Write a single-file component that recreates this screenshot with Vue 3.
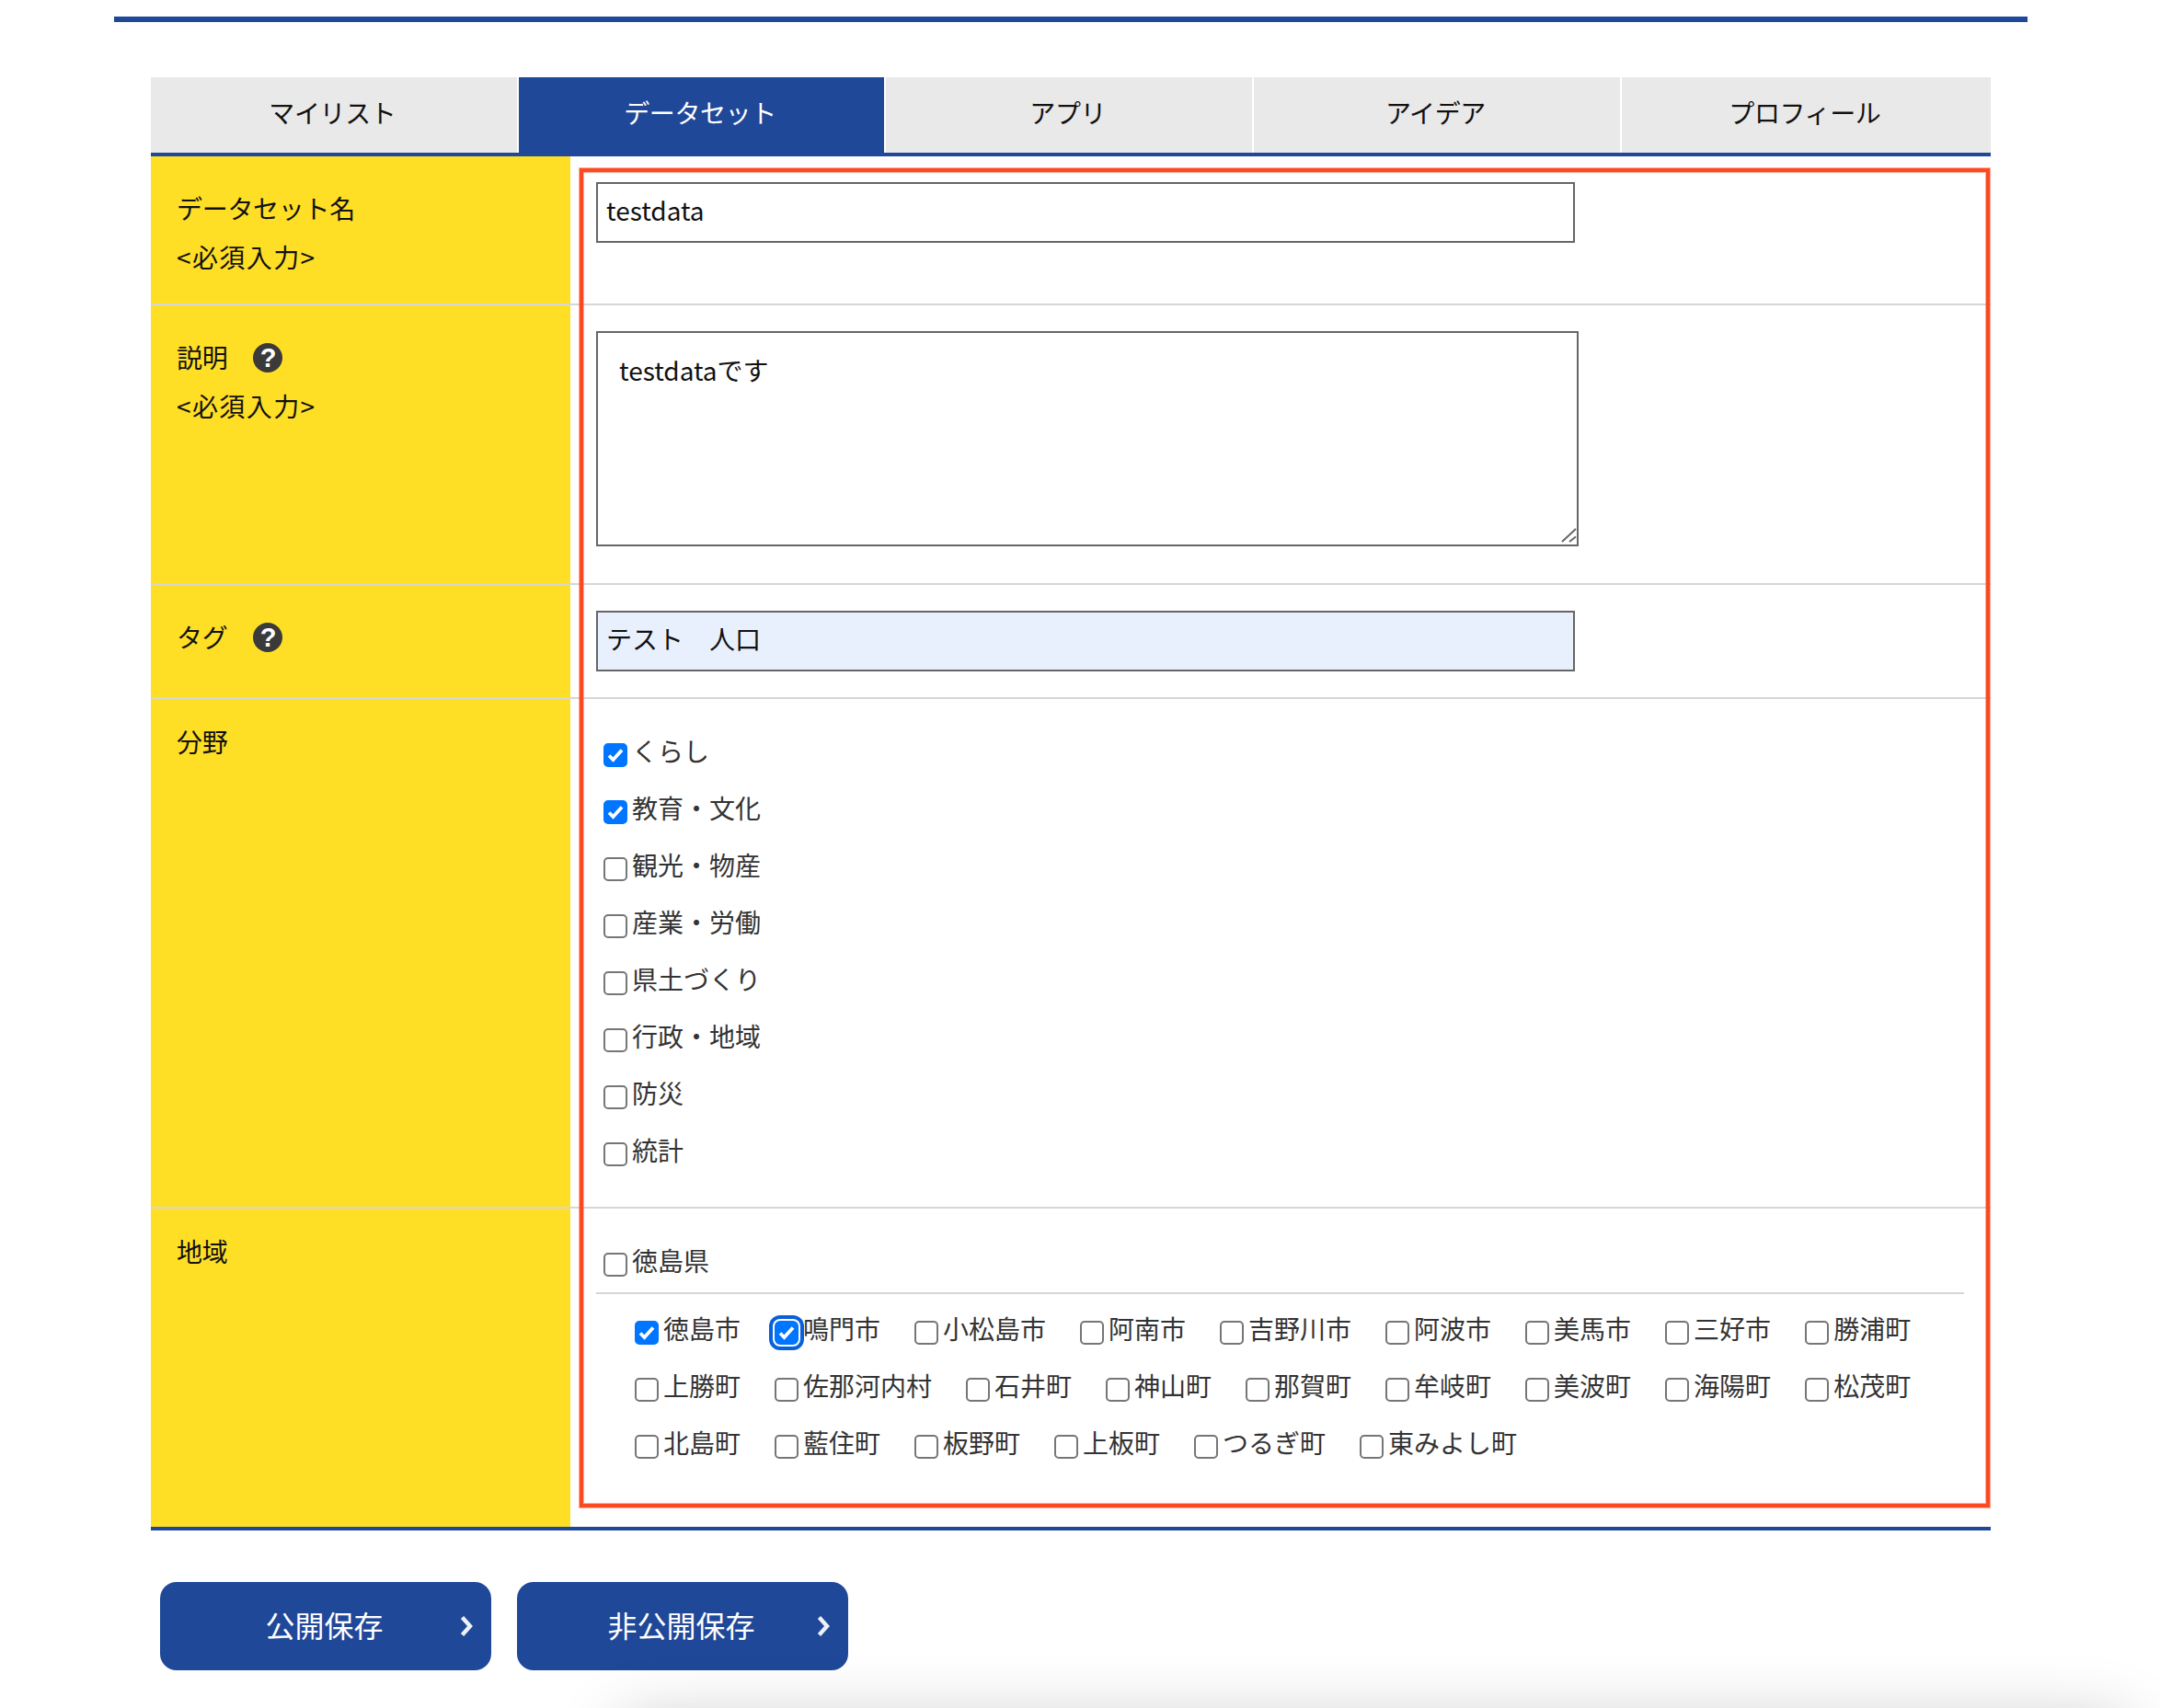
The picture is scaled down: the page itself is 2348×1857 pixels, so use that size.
<script setup>
const tabs = ['マイリスト', 'データセット', 'アプリ', 'アイデア', 'プロフィール']
const fields = [
  { name: 'くらし', checked: true },
  { name: '教育・文化', checked: true },
  { name: '観光・物産' },
  { name: '産業・労働' },
  { name: '県土づくり' },
  { name: '行政・地域' },
  { name: '防災' },
  { name: '統計' }
]
const cities = [
  { name: '徳島市', checked: true },
  { name: '鳴門市', checked: true, focus: true },
  ...['小松島市', '阿南市', '吉野川市', '阿波市', '美馬市', '三好市', '勝浦町', '上勝町', '佐那河内村', '石井町', '神山町', '那賀町', '牟岐町', '美波町', '海陽町', '松茂町', '北島町', '藍住町', '板野町', '上板町', 'つるぎ町', '東みよし町'].map((name) => ({ name }))
]
</script>

<template>
  <div class="page">
    <div class="topbar"></div>
    <main class="panel">
      <nav class="tabs">
        <div v-for="(t, i) in tabs" :key="t" class="tab" :class="{ active: i === 1 }">{{ t }}</div>
      </nav>
      <section class="table">
        <div class="row r1">
          <div class="head"><p>データセット名</p><p class="req">&lt;必須入力&gt;</p></div>
          <div class="body"><input class="text" type="text" value="testdata" /></div>
        </div>
        <div class="row r2">
          <div class="head">
            <p>説明<span class="help">?</span></p>
            <p class="req">&lt;必須入力&gt;</p>
          </div>
          <div class="body">
            <div class="area-wrap">
              <textarea class="area">testdataです</textarea>
              <svg class="grip" viewBox="0 0 18 18" width="18" height="18"><path d="M2 16 17 2M10 16 17 10.5" fill="none" stroke="#666" stroke-width="2" /></svg>
            </div>
          </div>
        </div>
        <div class="row r3">
          <div class="head"><p>タグ<span class="help">?</span></p></div>
          <div class="body"><input class="text filled" type="text" value="テスト　人口" /></div>
        </div>
        <div class="row r4">
          <div class="head short"><p>分野</p></div>
          <div class="body">
            <label v-for="f in fields" :key="f.name" class="check block">
              <span class="box">
                <input type="checkbox" :checked="f.checked" />
                <svg v-if="f.checked" viewBox="0 0 26 26" width="26" height="26"><path d="M6 13.5 10.5 18 20 7.5" fill="none" stroke="#fff" stroke-width="3.8" /></svg>
              </span>
              <span>{{ f.name }}</span>
            </label>
          </div>
        </div>
        <div class="row r5">
          <div class="head short"><p>地域</p></div>
          <div class="body">
            <label class="check block">
              <span class="box"><input type="checkbox" /></span>
              <span>徳島県</span>
            </label>
            <div class="divider"></div>
            <div class="cities">
              <label v-for="c in cities" :key="c.name" class="check">
                <span class="box">
                  <input type="checkbox" :checked="c.checked" :class="{ focus: c.focus }" />
                  <svg v-if="c.checked" viewBox="0 0 26 26" width="26" height="26"><path d="M6 13.5 10.5 18 20 7.5" fill="none" stroke="#fff" stroke-width="3.8" /></svg>
                </span>
                <span>{{ c.name }}</span>
              </label>
            </div>
          </div>
        </div>
      </section>
      <div class="actions">
        <button v-for="b in ['公開保存', '非公開保存']" :key="b" class="btn" type="button">
          {{ b }}
          <svg class="chev" viewBox="0 0 14 24" width="14" height="24"><path d="M2.5 2.5 11 12 2.5 21.5" fill="none" stroke="#eef1f8" stroke-width="4.4" /></svg>
        </button>
      </div>
    </main>
    <div class="annotation"></div>
    <div class="window-shadow"></div>
  </div>
</template>

<style>
html, body { margin: 0; padding: 0; background: #fff; }
</style>

<style scoped>
.page {
  position: relative;
  width: 2348px;
  height: 1857px;
  overflow: hidden;
  background: #fff;
  color: #111;
  font-family: "Noto Sans CJK JP", "Noto Sans", sans-serif;
  font-size: 28px;
}
.topbar {
  width: 2080px;
  height: 6px;
  margin: 18px 0 0 124px;
  background: #1f4899;
}
.panel {
  width: 2000px;
  margin: 60px 0 0 164px;
}
.tabs {
  display: flex;
  height: 82px;
  border-bottom: 4px solid #1f4899;
}
.tab {
  flex: 0 0 399.7px;
  display: flex;
  align-items: center;
  justify-content: center;
  padding: 0 3px 7px 0;
  box-sizing: border-box;
  background: #e9e9e9;
  border-right: 2px solid #fff;
  letter-spacing: -0.4px;
}
.tab:last-child { flex: 1; border-right: 0; }
.tab.active { background: #1f4899; color: #fff; }
.table { border-bottom: 4px solid #1f4899; }
.row {
  display: grid;
  grid-template-columns: 456px 1fr;
  border-bottom: 2px solid #d6d6d6;
}
.row:last-child { border-bottom: 0; }
.head {
  background: #ffdf26;
  padding: 30px 28px 0;
  letter-spacing: -0.3px;
}
.head.short { padding-top: 20px; }
.head p {
  margin: 0;
  height: 53px;
  line-height: 53px;
  display: flex;
  align-items: center;
}
.head p.req { letter-spacing: 1.4px; }
.help {
  display: inline-block;
  width: 32px;
  height: 32px;
  margin-left: 28px;
  border-radius: 50%;
  background: #3a3a3a;
  color: #fff;
  font-family: "Liberation Sans", sans-serif;
  font-weight: 700;
  font-size: 29px;
  line-height: 32px;
  text-align: center;
}
.body { padding-left: 28px; padding-right: 29px; }
.text {
  display: block;
  box-sizing: border-box;
  width: 1064px;
  height: 66px;
  padding: 0 9px 6px;
  border: 2px solid #666;
  border-radius: 0;
  background: #fff;
  color: #111;
  font: inherit;
  outline: 0;
}
.text.filled { background: #e8f0fe; }
.area-wrap {
  position: relative;
  width: 1068px;
  height: 234px;
}
.area {
  display: block;
  box-sizing: border-box;
  width: 100%;
  height: 100%;
  padding: 20px 23px;
  border: 2px solid #666;
  border-radius: 0;
  color: #111;
  font: inherit;
  outline: 0;
  resize: none;
}
.grip {
  position: absolute;
  right: 2px;
  bottom: 3px;
}
.r1 .body { padding-top: 28px; padding-bottom: 66px; }
.r2 .body { padding-top: 28px; padding-bottom: 40px; }
.r3 .body { padding-top: 28px; padding-bottom: 28px; }
.r4 .body { padding-top: 26px; padding-bottom: 30px; padding-left: 36px; }
.r5 .body { padding-top: 26px; padding-bottom: 60px; }
.check {
  display: flex;
  height: 62px;
  gap: 5px;
  line-height: 60px;
  color: #333;
}
.box {
  position: relative;
  flex: none;
  width: 26px;
  height: 26px;
  margin-top: 22px;
}
.box input {
  appearance: none;
  display: block;
  box-sizing: border-box;
  width: 26px;
  height: 26px;
  margin: 0;
  border: 2px solid #767676;
  border-radius: 5px;
  background: #fff;
}
.box input:checked {
  border-color: #0075ff;
  background: #0075ff;
}
.box input.focus {
  box-shadow: 0 0 0 2px #fff, 0 0 0 6px #0a60d8;
  border-radius: 6px;
}
.box svg {
  position: absolute;
  left: 0;
  top: 0;
}
.r5 .block { margin-left: 8px; }
.divider {
  height: 2px;
  margin: 3px 0 7px;
  background: #d6d6d6;
}
.cities {
  display: flex;
  flex-wrap: wrap;
  column-gap: 37px;
  padding-left: 42px;
}
.actions {
  display: flex;
  gap: 28px;
  margin: 56px 0 0 10px;
}
.btn {
  position: relative;
  width: 360px;
  height: 96px;
  padding: 0 3px 5px 0;
  border: 0;
  border-radius: 18px;
  background: #1f4899;
  color: #fff;
  font: inherit;
  font-size: 32px;
}
.chev {
  position: absolute;
  top: 36px;
  right: 20px;
}
.annotation {
  position: absolute;
  left: 630px;
  top: 182.5px;
  width: 1533px;
  height: 1456.5px;
  box-sizing: border-box;
  border: 4px solid #fc4a20;
  box-shadow: 0 0 0 1px rgba(252, 74, 32, 0.45), inset 0 0 0 1px rgba(252, 74, 32, 0.45);
  pointer-events: none;
}
.window-shadow {
  position: absolute;
  left: 680px;
  right: 40px;
  top: 1880px;
  height: 200px;
  border-radius: 20px;
  background: #ddd;
  box-shadow: 0 0 70px 10px rgba(0, 0, 0, 0.22);
}
</style>
